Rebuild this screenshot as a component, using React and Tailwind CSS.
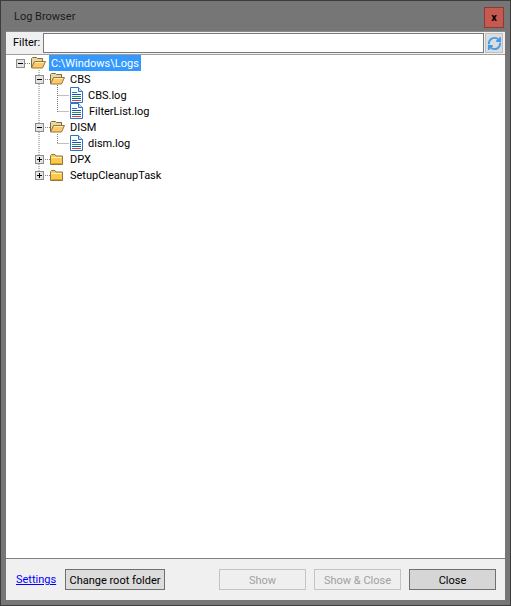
import React from "react";
import { RefreshCw } from "lucide-react";

const FOLDER_OPEN = (
  <svg width="15" height="12" viewBox="0 0 15 12" className="block shrink-0">
    <path d="M.5 10.5V1.5L1.5 .5H5.5L6.5 1.5H11.5V4" fill="#e8d8a8" stroke="#7d6a3c" />
    <path d="M.5 11L3.5 4.5H14.5L11.5 11Z" fill="#fbc968" stroke="#96763a" />
    <path d="M4 5.5H13" stroke="#ffe9b0" />
  </svg>
);

const FOLDER_CLOSED = (
  <svg width="13" height="11" viewBox="0 0 13 11" className="block shrink-0">
    <path d="M.5 10.5V1.5L1.5 .5H5L6 2H12.5V10.5Z" fill="#fbc94f" stroke="#8f7a45" />
    <path d="M1.5 3.5H11.5" stroke="#fff2c4" />
    <path d="M1.5 9.5H11.5" stroke="#e59a10" />
  </svg>
);

const LOG_FILE = (
  <svg width="13" height="16" viewBox="0 0 13 16" className="block shrink-0">
    <path d="M.5 .5H8.5L12.5 4.5V15.5H.5Z" fill="#fff" stroke="#2f73c8" />
    <path d="M8.5 .5V4.5H12.5" fill="#cfe2f8" stroke="#2f73c8" />
    <path d="M2 5.5H7" stroke="#2f73c8" />
    <path d="M2 7.5H11" stroke="#1d4fb8" />
    <path d="M2 9.5H11" stroke="#2b9a45" />
    <path d="M2 11.5H11" stroke="#1d4fb8" />
    <path d="M2 13.5H11" stroke="#c9473a" />
  </svg>
);

function Expander({ open }) {
  return (
    <span className="w-[9px] h-[9px] shrink-0 border border-[#8c8c8c] bg-[#e4e4e4] flex items-center justify-center relative">
      <span className="block w-[5px] h-px bg-black" />
      {!open && <span className="absolute block w-px h-[5px] bg-black" />}
    </span>
  );
}

function Node({ pad, expander, icon, iconGap, textGap, selected, children }) {
  return (
    <div className="h-4 flex items-center" style={{ paddingLeft: pad }}>
      {expander}
      <span className={iconGap}>{icon}</span>
      <span className={`${textGap} pt-px leading-[15px] whitespace-nowrap ${selected ? "bg-[#3399ff] text-white px-[2px]" : ""}`}>{children}</span>
    </div>
  );
}

// dotted connectors of the tree, boxes and icons sit on top of them
function TreeLines() {
  return (
    <svg width="120" height="130" className="absolute left-0 top-0" stroke="#808080" strokeDasharray="1 1" fill="none">
      <path d="M19 8.5H25" />
      <path d="M37 24.5H44" />
      <path d="M37 72.5H44" />
      <path d="M37 104.5H44" />
      <path d="M37 120.5H44" />
      <path d="M33 15V121" />
      <path d="M51.5 30V57" />
      <path d="M51.5 79V89" />
      <path d="M51.5 40.5H63" />
      <path d="M51.5 56.5H63" />
      <path d="M51.5 88.5H63" />
    </svg>
  );
}

export default function App() {
  return (
    <div className="w-[511px] h-[606px] bg-[#767676] border border-[#3c3c3c] flex flex-col text-[11px] text-black font-['Roboto',sans-serif]">
      <div className="h-[30px] shrink-0 flex items-start pl-[13px] pr-[6px]">
        <span className="mt-[8px] leading-4 text-[#1c1c1c]">Log Browser</span>
        <span className="ml-auto w-[20px] h-[21px] border border-[#8a3b34] bg-[#c75a50] flex items-center justify-center font-bold text-[11px] leading-none mt-[6px]">x</span>
      </div>

      <div className="flex-1 mx-[5px] mb-[5px] bg-[#f0f0f0] flex flex-col min-h-0 border-t border-[#8a8a8a]">
        <div className="h-[22px] shrink-0 flex items-center pl-[7px] pr-[2px]">
          <span className="w-[30px]">Filter:</span>
          <input className="flex-1 h-[20px] bg-white border border-[#7a7a7a] outline-none" />
          <span className="ml-px w-[18px] h-[20px] bg-[#dcdcdc] border border-[#c0c0c0] flex items-center justify-center">
            <RefreshCw size={15} strokeWidth={3} className="text-[#3f9be8]" />
          </span>
        </div>

        <div className="flex-1 bg-white relative min-h-0 border-t border-[#a0a0a0] border-b border-b-[#7f7f7f]">
          <TreeLines />
          <div className="relative">
            <Node pad={10} expander={<Expander open />} icon={FOLDER_OPEN} iconGap="ml-[6px]" textGap="ml-[3px]" selected>C:\Windows\Logs</Node>
            <Node pad={29} expander={<Expander open />} icon={FOLDER_OPEN} iconGap="ml-[6px]" textGap="ml-[5px]">CBS</Node>
            <Node pad={64} icon={LOG_FILE} textGap="ml-[5px]">CBS.log</Node>
            <Node pad={64} icon={LOG_FILE} textGap="ml-[6px]">FilterList.log</Node>
            <Node pad={29} expander={<Expander open />} icon={FOLDER_OPEN} iconGap="ml-[6px]" textGap="ml-[5px]">DISM</Node>
            <Node pad={64} icon={LOG_FILE} textGap="ml-[5px]">dism.log</Node>
            <Node pad={29} expander={<Expander />} icon={FOLDER_CLOSED} iconGap="ml-[6px]" textGap="ml-[7px]">DPX</Node>
            <Node pad={29} expander={<Expander />} icon={FOLDER_CLOSED} iconGap="ml-[6px]" textGap="ml-[7px]">SetupCleanupTask</Node>
          </div>
        </div>

        <div className="h-[41px] shrink-0 flex items-center pl-[10px] pr-[9px] pb-px whitespace-nowrap">
          <a className="w-[49px] pt-[2px] text-[#0000ff] underline">Settings</a>
          <button className="w-[100px] h-[21px] bg-[#dcdcdc] border border-[#707070] pt-[3px]">Change root folder</button>
          <button disabled className="ml-auto w-[87px] h-[21px] bg-[#efefef] border border-[#c4c4c4] text-[#a0a0a0] pt-[3px]">Show</button>
          <button disabled className="ml-[8px] w-[87px] h-[21px] bg-[#efefef] border border-[#c4c4c4] text-[#a0a0a0] pt-[3px]">Show &amp; Close</button>
          <button className="ml-[8px] w-[87px] h-[21px] bg-[#d6d6d6] border border-[#707070] pt-[3px]">Close</button>
        </div>
      </div>
    </div>
  );
}
